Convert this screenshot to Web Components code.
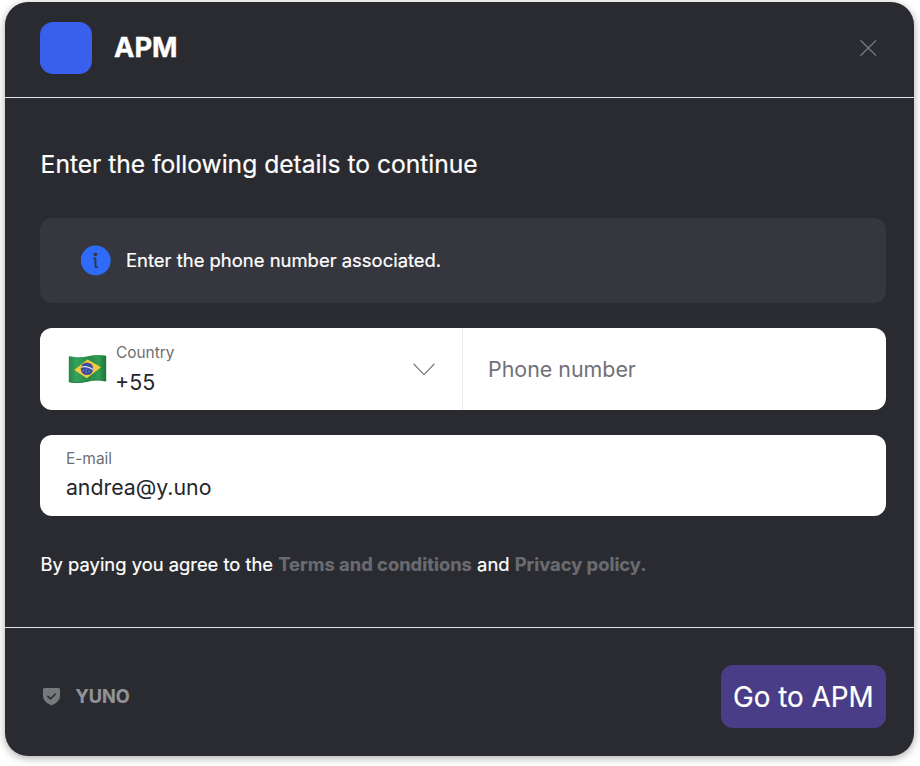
<!DOCTYPE html>
<html lang="en">
<head>
<meta charset="utf-8">
<title>APM</title>
<style>
  html, body { margin: 0; background: #fff; }
  body { width: 920px; height: 766px; overflow: hidden; font-family: Inter, "Liberation Sans", sans-serif; color: #fff; padding: 1.5px 6px 0 5px; box-sizing: border-box; }
</style>
</head>
<body>
<apm-dialog>
  <brand-title slot="header">APM</brand-title>
  <close-button slot="header"></close-button>
  <form-heading>Enter the following details to continue</form-heading>
  <info-notice>Enter the phone number associated.</info-notice>
  <phone-field code="+55" label="Country">Phone number</phone-field>
  <text-field label="E-mail">andrea@y.uno</text-field>
  <legal-text>By paying you agree to the <b>Terms and conditions</b> and <b>Privacy policy.</b></legal-text>
  <secure-badge slot="footer">YUNO</secure-badge>
  <primary-button slot="footer">Go to APM</primary-button>
</apm-dialog>
<script>
function define(name, html) {
  const template = document.createElement('template');
  template.innerHTML = html;
  customElements.define(name, class extends HTMLElement {
    constructor() {
      super();
      this.attachShadow({ mode: 'open' }).append(template.content.cloneNode(true));
    }
    connectedCallback() {
      this.shadowRoot.querySelectorAll('[data-attr]').forEach(el => {
        el.textContent = this.getAttribute(el.dataset.attr);
      });
    }
  });
}

define('apm-dialog', `
<style>
  :host { display: flex; flex-direction: column; box-sizing: border-box; height: 754.5px; border-radius: 23px; overflow: hidden; background: #2a2b30; box-shadow: 0 2px 8px rgba(0,0,0,.34); -webkit-text-stroke: .2px; }
  header, footer { display: flex; align-items: center; justify-content: space-between; box-sizing: border-box; }
  header { height: 96.5px; padding: 0 36px 3px 35px; border-bottom: 1.5px solid #e3e3e5; }
  main { flex: 1; display: flex; flex-direction: column; padding: 46px 28.5px 0 35px; }
  footer { height: 129px; padding: 9px 28.5px 0 37px; border-top: 1.5px solid #e3e3e5; }
</style>
<header><slot name="header"></slot></header>
<main><slot></slot></main>
<footer><slot name="footer"></slot></footer>`);

define('brand-title', `
<style>
  :host { display: flex; align-items: center; gap: 22px; font-size: 27.3px; font-weight: 700; line-height: 50px; }
  i { width: 52px; height: 52px; border-radius: 13px; background: #3860ec; }
  span { -webkit-text-stroke: .4px; }
</style>
<i></i><span><slot></slot></span>`);

define('close-button', `
<style>:host { display: block; width: 20px; height: 20px; } svg { display: block; }</style>
<svg width="20" height="20" viewBox="0 0 20 20" fill="none" stroke="#77787c" stroke-width="1.3" stroke-linecap="round"><path d="M2.9 2.7 17.7 17.3M17.7 2.7 2.9 17.3"/></svg>`);

define('form-heading', `
<style>:host { display: block; font-size: 24.62px; line-height: 40px; margin-bottom: 34px; padding-left: .6px; white-space: nowrap; }</style>
<slot></slot>`);

define('info-notice', `
<style>
  :host { display: flex; align-items: center; gap: 15.5px; box-sizing: border-box; height: 85px; padding: 0 40.5px; margin-bottom: 25px; border-radius: 12px; background: #36363e; font-size: 18.45px; }
  svg { flex: none; }
  span { padding-bottom: 1.5px; }
</style>
<svg width="30" height="31" viewBox="0 0 30 31"><circle cx="14.7" cy="15.5" r="15" fill="#2e6bf8"/><circle cx="14.4" cy="9.3" r="1.9" fill="#34364a"/><path d="M13.2 13.6h1.200v6.800c0 1.300.5 1.800 1.500 1.900" fill="none" stroke="#34364a" stroke-width="2" stroke-linecap="round" stroke-linejoin="round"/></svg>
<span><slot></slot></span>`);

define('phone-field', `
<style>
  :host { display: grid; grid-template-columns: 422px 1fr; height: 81.5px; margin-bottom: 25px; border-radius: 12px; overflow: hidden; background: #fff; -webkit-text-stroke: 0; }
  .country { display: flex; align-items: center; padding: 0 27.5px 0 28px; }
  .flag { flex: none; margin-right: 9px; }
  .text { flex: 1; }
  .label { font-size: 15.4px; line-height: 24px; color: #6d6e74; }
  .code { font-size: 21.4px; line-height: 30px; color: #25262b; margin: 2px 0 0 -1px; }
  .number { display: flex; align-items: center; border-left: 1.5px solid #e9eaef; padding-left: 25px; font-size: 21.4px; color: #717178; }
</style>
<div class="country">
  <svg class="flag" width="39" height="30" viewBox="0 0 39 30">
    <defs>
      <linearGradient id="g" x1="0" x2="1" y1="0" y2="0"><stop offset="0" stop-color="#25864a"/><stop offset=".2" stop-color="#36a25b"/><stop offset=".55" stop-color="#258b45"/><stop offset=".8" stop-color="#349c54"/><stop offset="1" stop-color="#177638"/></linearGradient>
      <clipPath id="c"><circle cx="19" cy="14.7" r="6.3"/></clipPath>
    </defs>
    <path d="M.8 3Q.8 2 2 2.2C8 3.8 14 3.6 20 2.2S32 .4 37.3 1.6Q38.2 1.8 38.2 2.8V26.2Q38.2 27.2 37 27C31 25.5 25 26 19 27.4S7 29 1.8 28Q.8 27.8.8 27Z" fill="url(#g)"/>
    <path d="M.8 27Q.8 27.8 1.8 28C7 29 13 28.8 19 27.4S31 25.5 37 27Q38.2 27.2 38.2 26.2" fill="none" stroke="#176d36" stroke-width=".8"/>
    <path d="M6.2 16 19.6 5.6 33 13.3 18.8 24.2Z" fill="#f5cb3d"/>
    <circle cx="19" cy="14.7" r="6.3" fill="#3f4e9d"/>
    <path d="M12 13.3C16 11.7 22 12.7 26 16.3" fill="none" stroke="#d5ddf0" stroke-width="1.3" clip-path="url(#c)"/>
    <path d="M15 16.5h1M17.5 18h1M20.5 17.5h1M18 15.8h1" stroke="#a9b3dc" stroke-width=".8"/>
  </svg>
  <div class="text"><div class="label" data-attr="label"></div><div class="code" data-attr="code"></div></div>
  <svg width="22" height="14" viewBox="0 0 22 14" fill="none" stroke="#77787c" stroke-width="1.1" stroke-linecap="round"><path d="M.8 2 11 12.600 21.2 2"/></svg>
</div>
<div class="number"><span><slot></slot></span></div>`);

define('text-field', `
<style>
  :host { display: block; box-sizing: border-box; height: 81.5px; padding: 12.5px 25.9px 0; margin-bottom: 33px; border-radius: 12px; background: #fff; color: #25262b; -webkit-text-stroke: 0; }
  .label { font-size: 15.5px; line-height: 24px; color: #6d6e74; }
  .value { font-size: 21.3px; line-height: 30px; margin-top: 1px; }
</style>
<div class="label" data-attr="label"></div><div class="value"><slot></slot></div>`);

define('legal-text', `
<style>
  :host { display: block; font-size: 18.39px; line-height: 30px; padding-left: .6px; white-space: nowrap; }
  ::slotted(b) { font-weight: 700; color: #6a6b70; }
</style>
<slot></slot>`);

define('secure-badge', `
<style>
  :host { display: flex; align-items: center; gap: 14.5px; font-size: 18.1px; font-weight: 700; color: #929398; }
  svg { flex: none; }
  span { padding-bottom: 1px; }
</style>
<svg width="19" height="19" viewBox="0 0 19 19"><path d="M2.5 1H16.5Q18 1 18 2.500V8.800C18 13.300 14.200 16.500 9.500 18.400C4.800 16.500 1 13.300 1 8.800V2.500Q1 1 2.500 1Z" fill="#77787c"/><path d="M5.900 9.400 8.500 11.800 13.200 7.200" fill="none" stroke="#2a2b30" stroke-width="1.600" stroke-linecap="round" stroke-linejoin="round"/></svg>
<span><slot></slot></span>`);

define('primary-button', `
<style>:host { display: flex; align-items: center; justify-content: center; width: 164.5px; height: 63px; border-radius: 12px; background: #493d87; color: #fff; font-size: 27.8px; white-space: nowrap; }</style>
<span><slot></slot></span>`);
</script>
</body>
</html>
